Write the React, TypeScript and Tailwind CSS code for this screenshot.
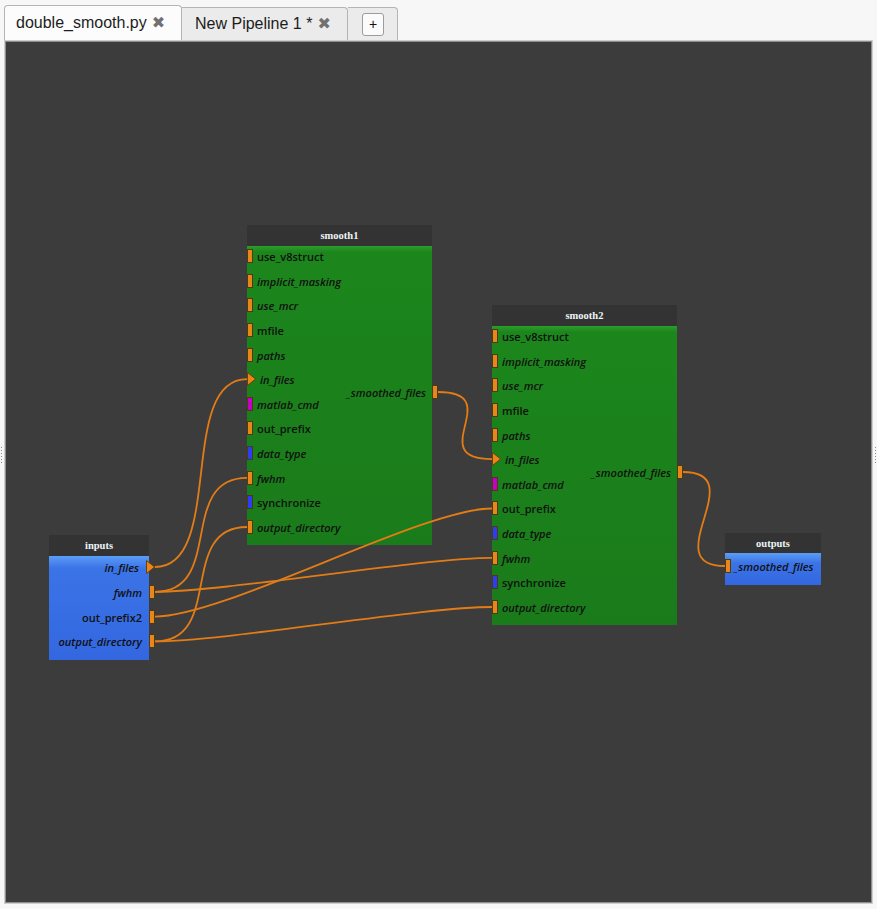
import React from "react";

// canvas origin in page pixels
const OX = 6;
const OY = 42;
// bezier handle length of the links
const C = 70;

type Kind = "o" | "m" | "b" | "a";
type Row = { name: string; italic?: boolean; kind?: Kind };

const smoothRows: Row[] = [
  { name: "use_v8struct" },
  { name: "implicit_masking", italic: true },
  { name: "use_mcr", italic: true },
  { name: "mfile" },
  { name: "paths", italic: true },
  { name: "in_files", italic: true, kind: "a" },
  { name: "matlab_cmd", italic: true, kind: "m" },
  { name: "out_prefix" },
  { name: "data_type", italic: true, kind: "b" },
  { name: "fwhm", italic: true },
  { name: "synchronize", kind: "b" },
  { name: "output_directory", italic: true },
];

const inputRows: Row[] = [
  { name: "in_files", italic: true, kind: "a" },
  { name: "fwhm", italic: true },
  { name: "out_prefix2" },
  { name: "output_directory", italic: true },
];

const links: [number, number, number, number][] = [
  [155, 567, 247, 379.2],
  [155, 591.8, 247, 477.8],
  [155, 591.8, 492, 557.8],
  [155, 616.6, 492, 508.5],
  [155, 641.4, 247, 527],
  [155, 641.4, 492, 607],
  [438, 392, 492, 459.2],
  [683, 472, 725, 566],
];

const labelCls = "mt-[1px] font-['Open_Sans',sans-serif] text-[11px] leading-[14px] font-semibold text-[#101010] whitespace-nowrap";

function PortMark({ kind = "o" }: { kind?: Kind }) {
  if (kind === "a") {
    return (
      <svg width="9" height="14" viewBox="0 0 9 14" className="shrink-0">
        <path d="M0.5 0.5 L8.6 7 L0.5 13.5 Z" fill="#e8861a" stroke="#6a4008" strokeWidth="1" />
      </svg>
    );
  }
  const color = kind === "m" ? "bg-[#c400c8]" : kind === "b" ? "bg-[#2c3df2]" : "bg-[#e8861a]";
  return <span className={`block w-[6px] h-[14px] shrink-0 border border-[#4b3a12] ${color}`} />;
}

function Header({ title, h }: { title: string; h: string }) {
  return (
    <div className={`${h} bg-[#333333] flex items-center justify-center pt-[1px] font-['Liberation_Serif',serif] text-[10.5px] font-bold text-[#eef3f8]`}>
      {title}
    </div>
  );
}

function ProcessNode({ title, x, y }: { title: string; x: number; y: number }) {
  return (
    <div className="absolute w-[185px] flex flex-col" style={{ left: x - OX, top: y - OY }}>
      <Header title={title} h="h-[21px]" />
      <div className="relative h-[299px] bg-[linear-gradient(to_bottom,#2a9e2a_0px,#1c861c_6px,#1a7b1a_100%)]">
        {smoothRows.map((r) => (
          <div key={r.name} className="h-[24.64px] flex items-start gap-[4px] pt-[3px]">
            <PortMark kind={r.kind} />
            <span className={`${labelCls} ${r.italic ? "italic" : ""}`}>{r.name}</span>
          </div>
        ))}
        <div className="absolute right-[-6px] top-[139px] flex items-start gap-[6px]">
          <span className={`${labelCls} italic text-[#5c0a0a]`}>_smoothed_files</span>
          <PortMark />
        </div>
      </div>
    </div>
  );
}

function InputsNode() {
  return (
    <div className="absolute w-[100px] flex flex-col" style={{ left: 49 - OX, top: 535 - OY }}>
      <Header title="inputs" h="h-[21px]" />
      <div className="h-[104px] bg-[linear-gradient(to_bottom,#5b9df6_0px,#3b74e7_12px,#3367e0_100%)]">
        {inputRows.map((r) => (
          <div key={r.name} className="h-[24.8px] flex items-start justify-end gap-[7px] pt-[4px]">
            <span className={`${labelCls} ${r.italic ? "italic" : ""}`}>{r.name}</span>
            <span className="-mr-[6px] flex">
              <PortMark kind={r.kind} />
            </span>
          </div>
        ))}
      </div>
    </div>
  );
}

function OutputsNode() {
  return (
    <div className="absolute w-[96px] flex flex-col" style={{ left: 725 - OX, top: 533 - OY }}>
      <Header title="outputs" h="h-[20px]" />
      <div className="h-[32px] bg-[linear-gradient(to_bottom,#5b9df6_0px,#3b74e7_10px,#3367e0_100%)]">
        <div className="flex items-start gap-[3px] pt-[6px]">
          <PortMark />
          <span className={`${labelCls} italic text-[#3a0820]`}>_smoothed_files</span>
        </div>
      </div>
    </div>
  );
}

function Links() {
  return (
    <svg className="absolute inset-0 w-full h-full pointer-events-none" width="865" height="860">
      <g transform={`translate(${-OX} ${-OY})`} fill="none" stroke="#e27c16" strokeWidth="1.8">
        {links.map(([x1, y1, x2, y2], i) => (
          <path key={i} d={`M${x1} ${y1} C${x1 + C} ${y1} ${x2 - C} ${y2} ${x2} ${y2}`} />
        ))}
      </g>
    </svg>
  );
}

function Grip({ side }: { side: "l" | "r" }) {
  return (
    <div className={`absolute top-[447px] flex flex-col gap-[2px] ${side === "l" ? "left-[1px]" : "right-[1px]"}`}>
      {[0, 1, 2, 3, 4, 5].map((i) => (
        <span key={i} className="block w-[1px] h-[1px] bg-[#8a8a8a]" />
      ))}
    </div>
  );
}

export default function App() {
  return (
    <div className="relative w-[877px] h-[909px] bg-[#f7f7f7] overflow-hidden">
      {/* tab bar */}
      <div className="h-[40px] flex items-end pl-[4px] font-['Liberation_Sans',Arial,sans-serif] text-[16px] text-[#1c1c1c]">
        <div className="h-[35px] w-[178px] flex items-center pl-[11px] bg-[#fcfcfc] border border-b-0 border-[#b4b4b4] rounded-t-[4px]">
          <span>double_smooth.py</span>
          <span className="ml-[5px] font-['DejaVu_Sans',sans-serif] text-[16px] leading-none text-[#707070]">✖</span>
        </div>
        <div className="h-[33px] w-[166px] flex items-center pl-[13px] bg-[#ebebeb] border-t border-r border-[#b4b4b4] rounded-tr-[4px]">
          <span>New Pipeline 1 *</span>
          <span className="ml-[5px] font-['DejaVu_Sans',sans-serif] text-[16px] leading-none text-[#707070]">✖</span>
        </div>
        <div className="h-[33px] w-[50px] flex items-center pl-[14px] bg-[#ebebeb] border-t border-r border-[#b4b4b4] rounded-tr-[4px]">
          <div className="w-[22px] h-[23px] flex items-center justify-center bg-[#fbfbfb] border border-[#9c9c9c] rounded-[3px] text-[14px] leading-none text-[#111]">
            +
          </div>
        </div>
      </div>

      {/* pipeline canvas */}
      <div className="ml-[4px] w-[869px] h-[864px] border border-[#cdcdcd]">
        <div className="w-full h-full border border-[#8e8e8e]">
          <div className="relative w-full h-full bg-[#3c3c3c] overflow-hidden">
            <ProcessNode title="smooth1" x={247} y={225} />
            <ProcessNode title="smooth2" x={492} y={305} />
            <InputsNode />
            <OutputsNode />
            <Links />
          </div>
        </div>
      </div>

      <Grip side="l" />
      <Grip side="r" />
    </div>
  );
}
